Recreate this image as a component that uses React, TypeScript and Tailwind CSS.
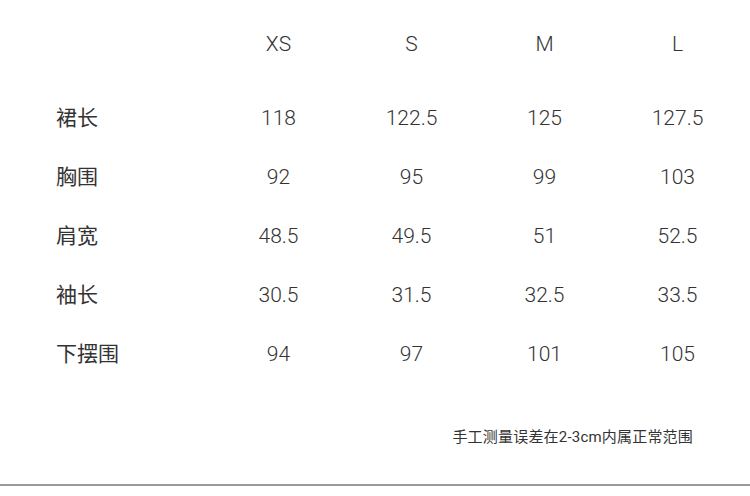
const sizes = ["XS", "S", "M", "L"];

const rows = [
  { name: "裙长", values: ["118", "122.5", "125", "127.5"] },
  { name: "胸围", values: ["92", "95", "99", "103"] },
  { name: "肩宽", values: ["48.5", "49.5", "51", "52.5"] },
  { name: "袖长", values: ["30.5", "31.5", "32.5", "33.5"] },
  { name: "下摆围", values: ["94", "97", "101", "105"] },
];

export default function App() {
  return (
    <div
      className="w-[750px] h-[496px] bg-white flex flex-col text-[#333] font-light"
      style={{ fontFamily: 'Roboto, "Noto Sans CJK SC", sans-serif' }}
    >
      <div className="pl-[56px] pt-[29px]">
        <div className="grid grid-cols-[156px_133px_133px_133px_133px] h-[30px] items-center text-[21px]">
          <div></div>
          {sizes.map((s) => (
            <div key={s} className="text-center">{s}</div>
          ))}
        </div>
        <div className="mt-[30px]">
          {rows.map((r) => (
            <div
              key={r.name}
              className="grid grid-cols-[156px_133px_133px_133px_133px] h-[59px] items-center text-[21px]"
            >
              <div className="font-normal">{r.name}</div>
              {r.values.map((v, i) => (
                <div key={i} className="text-center">{v}</div>
              ))}
            </div>
          ))}
        </div>
      </div>
      <div className="flex-1 flex justify-end items-start pr-[57px] pt-[42px]">
        <span className="text-[15px] font-normal tracking-[0.2px]">手工测量误差在2-3cm内属正常范围</span>
      </div>
      <div className="h-[2px] bg-[#999] mb-[10px]"></div>
    </div>
  );
}
